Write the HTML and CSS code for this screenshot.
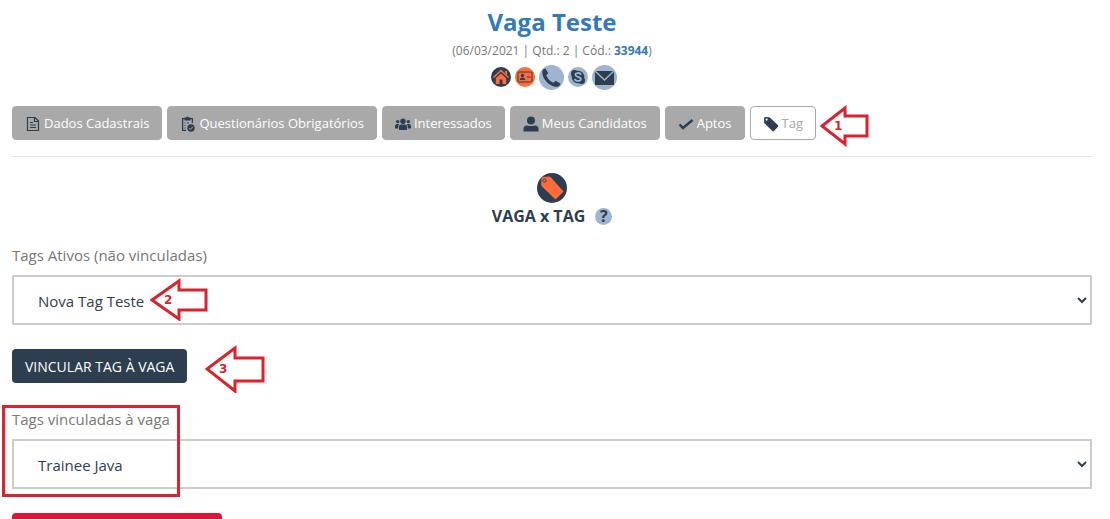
FILE: index.html
```html
<!DOCTYPE html>
<html lang="pt-BR">
<head>
  <meta charset="utf-8">
  <title>Vaga Teste</title>
  <link rel="stylesheet" href="styles.css">
</head>
<body>
  <header class="job-header">
    <h1>Vaga Teste</h1>
    <p class="job-info">(06/03/2021 | Qtd.: 2 | Cód.: <b>33944</b>)</p>
    <div class="job-links">
      <a href="#" aria-label="Início">
        <svg width="20" height="20" viewBox="0 0 20 20"><circle cx="10" cy="10" r="10" fill="#2c3e50"/><path d="M2.500 10.500L10 3.500l7.500 7" fill="none" stroke="#ff6c3a" stroke-width="1.600"/><path d="M14 4h2v4l-2-2zM4.800 11.300L10 6.500l5.200 4.800V17h-3.700v-4.500h-3V17H4.800z" fill="#ff6c3a"/></svg>
      </a>
      <a href="#" aria-label="Cartão">
        <svg width="20" height="20" viewBox="0 0 20 20"><circle cx="10" cy="10" r="10" fill="#ff6c3a"/><rect x="3" y="5" width="14" height="10" rx="1" fill="none" stroke="#2c3e50"/><circle cx="7.500" cy="8.500" r="1.700" fill="#2c3e50"/><path d="M4.800 13q0-2.500 2.700-2.500t2.700 2.500zM12 9.500h3.500v1H12z" fill="#2c3e50"/></svg>
      </a>
      <a href="#" aria-label="Telefone">
        <svg width="25" height="25" viewBox="0 0 25 25"><circle cx="12.500" cy="12.500" r="12.500" fill="#9fb4d0"/><path d="M3.500 5.500Q4.500 3.500 6.500 3.500l2.700 4.800-2 2c1.300 3.500 3.800 6 7.300 7.500l2.200-2 4.800 3q-.5 2-2.500 3C11 22.500 2 13.500 3.500 5.500z" fill="#2c3e50"/></svg>
      </a>
      <a href="#" aria-label="Skype">
        <svg width="20" height="20" viewBox="0 0 20 20"><circle cx="10" cy="10" r="10" fill="#9fb4d0"/><circle cx="10" cy="10" r="6.300" fill="#2c3e50"/><circle cx="6.500" cy="6.500" r="3.500" fill="#2c3e50"/><circle cx="13.500" cy="13.500" r="3.500" fill="#2c3e50"/><path d="M13 7.800C12.500 5.300 7.200 5.500 7.400 8c.2 2.300 5.500 1.500 5.500 4 0 2.600-5.700 2.700-6-.2" fill="none" stroke="#9fb4d0" stroke-width="1.800"/></svg>
      </a>
      <a href="#" aria-label="E-mail">
        <svg width="25" height="25" viewBox="0 0 25 25"><circle cx="12.500" cy="12.500" r="12.500" fill="#9fb4d0"/><rect x="3" y="6" width="19" height="14" fill="#2c3e50"/><path d="M3 6l9.500 9L22 6" fill="none" stroke="#9fb4d0" stroke-width="1.500"/></svg>
      </a>
    </div>
  </header>

  <nav class="tabs">
    <button type="button" class="tab">
      <svg width="16" height="16" viewBox="0 0 16 16"><path d="M2.500 1.500h7.500l3.500 3.500v9.500h-11zM9.500 1.500V5.500h4M5 6.500h3M5 9h6M5 11.500h6" fill="none" stroke="#2c3e50" stroke-width="1.200"/></svg>
      Dados Cadastrais
    </button>
    <button type="button" class="tab">
      <svg width="16" height="16" viewBox="0 0 16 16"><path d="M6 14.400H2.600V2.600h9.800V7" fill="none" stroke="#2c3e50" stroke-width="1.300"/><path d="M4.500 4.500v-3h1.700Q7.500-.5 8.800 1.500h1.700v3z" fill="#2c3e50"/><path d="M4.500 7h1M4.500 9.500h1M4.500 12h1M7 7h2" stroke="#2c3e50"/><circle cx="11" cy="12" r="3.700" fill="#2c3e50"/><path d="M9.300 12.200l1.200 1.200 2.300-2.700" fill="none" stroke="#a9a9a9"/></svg>
      Questionários Obrigatórios
    </button>
    <button type="button" class="tab">
      <svg width="16" height="16" viewBox="0 0 16 16"><g fill="#2c3e50"><circle cx="8" cy="5.200" r="2.700"/><circle cx="2.700" cy="5.600" r="1.700"/><circle cx="13.300" cy="5.600" r="1.700"/><path d="M4 14v-3.500Q4 8.500 6 8.500h4q2 0 2 2V14zM0 12.500V9.500Q.3 8 2 8h2.200Q3 9 3.200 12.500zM16 12.500V9.500Q15.700 8 14 8h-2.200Q13 9 12.800 12.500z"/></g></svg>
      Interessados
    </button>
    <button type="button" class="tab">
      <svg width="16" height="16" viewBox="0 0 16 16"><circle cx="8" cy="4.500" r="4" fill="#2c3e50"/><path d="M.5 15.500v-2.500q0-3.500 3.500-3.500 4 1 8 0 3.500 0 3.500 3.500v2.500z" fill="#2c3e50"/></svg>
      Meus Candidatos
    </button>
    <button type="button" class="tab">
      <svg width="16" height="16" viewBox="0 0 16 16"><path d="M1.500 8.500L5 12 14.500 4" fill="none" stroke="#2c3e50" stroke-width="2.400"/></svg>
      Aptos
    </button>
    <button type="button" class="tab active">
      <svg width="16" height="16" viewBox="0 0 16 16"><path d="M1 2.500Q1 1 2.500 1L6.500 1.200 15 9.200q.7.800 0 1.600L11 15q-.8.600-1.600 0L1.200 7z" fill="#2c3e50"/><circle cx="3.600" cy="3.600" r="1.100" fill="#fff"/></svg>
      Tag
    </button>
    <div class="arrow arrow-1">
      <svg width="49" height="42" viewBox="0 0 49 42"><path d="M2 21L25 3v8h22v20H25v8z"/></svg>
      <span>1</span>
    </div>
  </nav>

  <hr>

  <main>
    <div class="section-title">
      <svg width="30" height="30" viewBox="0 0 30 30"><circle cx="15" cy="15" r="15" fill="#2c3e50"/><path d="M4.500 6q0-1.500 1.500-2l6-.5q1 0 2 1L26.500 18.500 18.500 26.500 5 13.500q-.8-1-.8-2z" fill="#ff6c3a"/><circle cx="7.500" cy="7.500" r="1.600" fill="none" stroke="#2c3e50"/></svg>
      <h2>
        VAGA x TAG
        <a href="#" class="help" aria-label="Ajuda">?</a>
      </h2>
    </div>

    <div class="field">
      <label for="activeTags">Tags Ativos (não vinculadas)</label>
      <select id="activeTags">
        <option>Nova Tag Teste</option>
      </select>
      <div class="arrow arrow-2">
        <svg width="58" height="43" viewBox="0 0 58 43"><path d="M2 22L29 3v9h27v20H29v9z"/></svg>
        <span>2</span>
      </div>
    </div>

    <div class="action">
      <button type="button" class="btn">VINCULAR TAG À VAGA</button>
      <div class="arrow arrow-3">
        <svg width="60" height="48" viewBox="0 0 60 48"><path d="M2 24L30 3v10h28v23H30v10z"/></svg>
        <span>3</span>
      </div>
    </div>

    <div class="field">
      <label for="linkedTags">Tags vinculadas à vaga</label>
      <select id="linkedTags">
        <option>Trainee Java</option>
      </select>
      <div class="highlight"></div>
    </div>

    <button type="button" class="btn btn-remove" aria-label="Desvincular"></button>
  </main>
</body>
</html>
```
FILE: styles.css
```css
* {
  box-sizing: border-box;
}

body {
  margin: 0;
  padding: 8px 18px 0 12px;
  font-family: "Open Sans", "Noto Sans", sans-serif;
  font-size: 15px;
  color: #777;
  background-color: #fff;
}

button, select {
  font-family: inherit;
}

svg {
  display: block;
  flex: none;
}

.job-header {
  text-align: center;
}

h1 {
  margin: 0;
  font-size: 24px;
  line-height: 28px;
  color: #337ab7;
}

.job-info {
  margin: 0;
  padding-top: 2px;
  font-size: 12px;
  line-height: 26px;
}

.job-info b {
  color: #337ab7;
}

.job-links {
  display: flex;
  justify-content: center;
  align-items: center;
  gap: 4px;
  height: 26px;
  padding-left: 4px;
}

.tabs {
  position: relative;
  display: flex;
  gap: 5px;
  margin-top: 16px;
}

.tab {
  display: flex;
  align-items: center;
  gap: 3px;
  height: 34px;
  padding: 0 12px;
  border: 1px solid #a9a9a9;
  border-radius: 4px;
  background-color: #a9a9a9;
  color: #fff;
  font-size: 13px;
  white-space: nowrap;
  cursor: pointer;
}

.tab svg {
  margin-top: 2px;
}

.tab.active {
  background-color: #fff;
  color: #a9a9a9;
}

hr {
  margin: 16px 0;
  border: 0;
  border-top: 1px solid #e5e5e5;
}

.section-title {
  display: flex;
  flex-direction: column;
  align-items: center;
}

h2 {
  display: flex;
  align-items: center;
  gap: 10px;
  margin: 0;
  font-size: 16px;
  line-height: 26px;
  color: #2c3e50;
}

.help {
  width: 17px;
  height: 17px;
  border-radius: 50%;
  background-color: #9fb4d0;
  color: #2c3e50;
  line-height: 17px;
  text-align: center;
  text-decoration: none;
}

.field {
  position: relative;
  margin-top: 14px;
}

.field label {
  display: block;
  margin-bottom: 8px;
  line-height: 24px;
}

.field select {
  display: block;
  width: 100%;
  height: 50px;
  padding: 2px 0 0 20px;
  border: 2px solid #ccc;
  border-radius: 0;
  background-color: #fff;
  color: #2c3e50;
  font-size: 15px;
}

.action {
  position: relative;
  margin: 24px 0;
}

.btn {
  display: block;
  height: 34px;
  padding: 0 13px;
  border: 0;
  border-radius: 4px;
  background-color: #2c3e50;
  color: #fff;
  font-size: 14px;
}

.btn-remove {
  width: 210px;
  margin-top: 24px;
  background-color: #dc143c;
}

.action + .field {
  margin-top: 0;
}

/* step markers */
.arrow {
  position: absolute;
  color: #d9232e;
  font: bold 12px "DejaVu Sans", sans-serif;
}

.arrow path {
  fill: #fff;
  stroke: #d9232e;
  stroke-width: 3;
}

.arrow span {
  position: absolute;
  top: 50%;
  left: 14px;
  transform: translateY(-50%);
}

.arrow-1 {
  top: -1px;
  left: 808px;
}

.arrow-2 {
  top: 35px;
  left: 138px;
}

.arrow-3 {
  top: -4px;
  left: 193px;
}

.highlight {
  position: absolute;
  top: -2px;
  left: -10px;
  width: 178px;
  height: 92px;
  border: 3px solid #d9232e;
  pointer-events: none;
}
```
